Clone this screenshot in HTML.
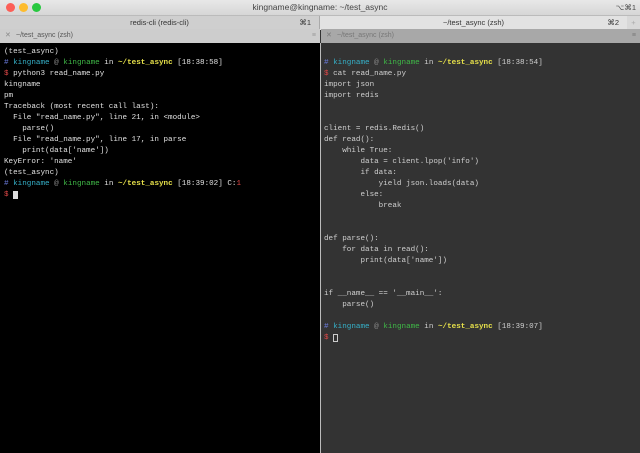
<!DOCTYPE html>
<html><head><meta charset="utf-8"><style>
*{margin:0;padding:0;box-sizing:border-box}
body{width:640px;height:453px;overflow:hidden;background:#333;font-family:"Liberation Sans",sans-serif;position:relative}
.title{position:absolute;left:0;top:0;width:640px;height:15px;background:linear-gradient(#e8e8e8,#d6d6d6);font-size:8.5px;color:#444;text-align:center;line-height:15px}
.dot{position:absolute;top:3px;width:9px;height:9px;border-radius:50%}
.tabs{position:absolute;top:15px;left:0;width:640px;height:14px;font-size:7.5px;color:#333;line-height:14px;border-top:1px solid #bbb}
.tab{position:absolute;top:0;height:14px;text-align:center}
.hdr{position:absolute;top:29px;height:14px;font-size:7px;line-height:14px;padding-left:16px}
pre{position:absolute;top:47px;font-family:"Liberation Mono",monospace;font-size:7.6px;line-height:11px;white-space:pre}
.b{color:#6c7de0}.c{color:#35b0c8}.g{color:#3fb847}.y{color:#e6e04a;font-weight:bold}.r{color:#e04848}.w{color:#888}
</style></head><body>
<div class="title">kingname@kingname: ~/test_async
<div class="dot" style="left:6px;background:#fc5f57"></div><div class="dot" style="left:19px;background:#fdbc2e"></div><div class="dot" style="left:32px;background:#28c840"></div>
<span style="position:absolute;right:4px;top:0;font-size:7.5px">⌥⌘1</span></div>
<div class="tabs">
<div class="tab" style="left:0;width:320px;background:#cfcfcf;border-right:1px solid #aaa">redis-cli (redis-cli)<span style="position:absolute;right:8px">⌘1</span></div>
<div class="tab" style="left:320px;width:307px;background:#e2e2e2">~/test_async (zsh)<span style="position:absolute;right:8px">⌘2</span></div>
<div class="tab" style="left:627px;width:13px;background:#d8d8d8;color:#aaa">+</div>
</div>
<div class="hdr" style="left:0;width:320px;background:#cdcdcd;color:#555"><span style="position:absolute;left:5px;color:#888">✕</span>~/test_async (zsh)<span style="position:absolute;right:4px;color:#999">≡</span></div>
<div class="hdr" style="left:321px;width:319px;background:#a8a8a8;color:#777"><span style="position:absolute;left:5px">✕</span>~/test_async (zsh)<span style="position:absolute;right:4px">≡</span></div>
<div style="position:absolute;left:0;top:43px;width:320px;height:410px;background:#000"></div>
<div style="position:absolute;left:320px;top:43px;width:1px;height:410px;background:#bbb"></div>
<pre style="left:4px;color:#e0e0e0">(test_async)
<span class="b">#</span> <span class="c">kingname</span> <span class="w">@</span> <span class="g">kingname</span> in <span class="y">~/test_async</span> [18:38:58]
<span class="r">$</span> python3 read_name.py
kingname
pm
Traceback (most recent call last):
  File "read_name.py", line 21, in &lt;module&gt;
    parse()
  File "read_name.py", line 17, in parse
    print(data['name'])
KeyError: 'name'
(test_async)
<span class="b">#</span> <span class="c">kingname</span> <span class="w">@</span> <span class="g">kingname</span> in <span class="y">~/test_async</span> [18:39:02] C:<span class="r">1</span>
<span class="r">$</span> <span style="background:#ddd"> </span></pre>
<pre style="left:324px;color:#cfcfcf"> 
<span class="b">#</span> <span class="c">kingname</span> <span class="w">@</span> <span class="g">kingname</span> in <span class="y">~/test_async</span> [18:38:54]
<span class="r">$</span> cat read_name.py
import json
import redis


client = redis.Redis()
def read():
    while True:
        data = client.lpop('info')
        if data:
            yield json.loads(data)
        else:
            break


def parse():
    for data in read():
        print(data['name'])


if __name__ == '__main__':
    parse()

<span class="b">#</span> <span class="c">kingname</span> <span class="w">@</span> <span class="g">kingname</span> in <span class="y">~/test_async</span> [18:39:07]
<span class="r">$</span> <span style="outline:1px solid #ccc;outline-offset:-1px"> </span></pre>
</body></html>
